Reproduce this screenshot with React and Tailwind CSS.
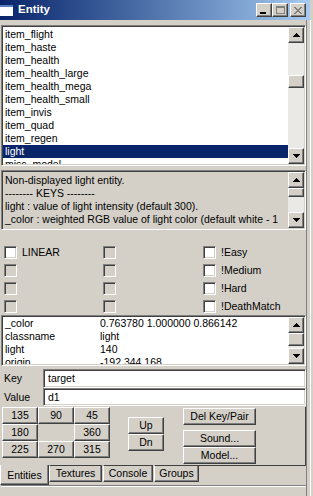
import React from "react";

// classic win2000 bevels
const raised =
  "bg-[#d4d0c8] border border-t-white border-l-white border-r-[#404040] border-b-[#404040] shadow-[inset_-1px_-1px_#808080]";
const sunken =
  "border border-t-[#808080] border-l-[#808080] border-r-white border-b-white shadow-[inset_1px_1px_#404040,inset_-1px_-1px_#d4d0c8]";

const entityNames = [
  "item_flight",
  "item_haste",
  "item_health",
  "item_health_large",
  "item_health_mega",
  "item_health_small",
  "item_invis",
  "item_quad",
  "item_regen",
  "light",
  "misc_model",
];

const description = [
  "Non-displayed light entity.",
  "-------- KEYS --------",
  "light : value of light intensity (default 300).",
  "_color : weighted RGB value of light color (default white - 1",
];

const flagRows = [
  [{ label: "LINEAR", on: true }, { on: false }, { label: "!Easy", on: true }],
  [{ on: false }, { on: false }, { label: "!Medium", on: true }],
  [{ on: false }, { on: false }, { label: "!Hard", on: true }],
  [{ on: false }, { on: false }, { label: "!DeathMatch", on: true }],
];

const keyValues = [
  ["_color", "0.763780 1.000000 0.866142"],
  ["classname", "light"],
  ["light", "140"],
  ["origin", "-192 344 168"],
];

const tabs = ["Entities", "Textures", "Console", "Groups"];

// small pixel triangle for scroll buttons
function Arrow({ down }) {
  const rows = down ? [7, 5, 3, 1] : [1, 3, 5, 7];
  return (
    <svg width="7" height="4" viewBox="0 0 7 4" shapeRendering="crispEdges">
      {rows.map((w, i) => (
        <rect key={i} x={(7 - w) / 2} y={i} width={w} height="1" fill="#000" />
      ))}
    </svg>
  );
}

function ScrollButton({ down }) {
  return (
    <div className={`${raised} w-[16px] h-[16px] shrink-0 flex items-center justify-center`}>
      <Arrow down={down} />
    </div>
  );
}

// gapClass / thumbClass are full class strings so tailwind sees them
function ScrollBar({ gapClass, thumbClass }) {
  return (
    <div className="w-[16px] shrink-0 flex flex-col">
      <ScrollButton />
      <div className="flex-1 flex flex-col bg-[#ebe9e5]">
        <div className={gapClass} />
        <div className={`${raised} ${thumbClass} shrink-0`} />
      </div>
      <ScrollButton down />
    </div>
  );
}

function Checkbox({ on }) {
  return (
    <div
      className={`${sunken} w-[13px] h-[13px] shrink-0 ${on ? "bg-white" : "bg-[#d4d0c8]"}`}
    />
  );
}

function Button({ children, className }) {
  return (
    <div className={`${raised} flex items-center justify-center leading-none ${className}`}>
      {children}
    </div>
  );
}

function TitleBar() {
  return (
    <div className="h-[20px] flex items-center bg-linear-to-r from-[#0a246a] to-[#a6caf0]">
      <div className="w-[13px] h-[11px] bg-white border-t-2 border-[#5a7fc0]" />
      <span className="ml-[5px] text-white font-bold text-[11.5px] leading-none">Entity</span>
      <div className="ml-auto flex items-center mr-[4px]">
        <div className={`${raised} w-[16px] h-[14px] flex items-end justify-center pb-[2px]`}>
          <div className="w-[6px] h-[2px] bg-black -ml-[2px]" />
        </div>
        <div className={`${raised} w-[16px] h-[14px] flex items-center justify-center`}>
          <div className="w-[9px] h-[8px] border border-t-2 border-[#808080]" />
        </div>
        <div className={`${raised} ml-[2px] w-[16px] h-[14px] flex items-center justify-center`}>
          <svg width="8" height="7" viewBox="0 0 8 7" shapeRendering="crispEdges">
            <path d="M0 0h2l2 2.5L6 0h2L5 3.5 8 7H6L4 4.5 2 7H0l3-3.5z" fill="#808080" />
          </svg>
        </div>
      </div>
    </div>
  );
}

export default function App() {
  return (
    <div className="w-[313px] h-[496px] bg-[#d4d0c8] flex flex-col overflow-hidden text-black text-[10.5px] font-['Liberation_Sans',Arial,sans-serif]">
      <div className="flex">
        <div className="w-[310px]">
          <TitleBar />
        </div>
        <div className="flex-1 bg-[#d4d0c8]" />
      </div>

      <div className="flex flex-1">
        <div className="w-[306px] pl-[1px] flex flex-col">
          {/* entity class list */}
          <div className={`${sunken} mt-[5px] h-[141px] flex bg-white`}>
            <div className="m-[1px] flex flex-1 overflow-hidden">
              <div className="flex-1 pt-[1px] overflow-hidden">
                {entityNames.map((name) => (
                  <div
                    key={name}
                    className={`h-[13px] leading-[13px] pl-[2px] whitespace-nowrap ${
                      name === "light" ? "bg-[#0a246a] text-white" : ""
                    }`}
                  >
                    {name}
                  </div>
                ))}
              </div>
              <ScrollBar gapClass="h-[32px]" thumbClass="h-[13px]" />
            </div>
          </div>

          {/* description */}
          <div className={`${sunken} mt-[4px] h-[60px] flex bg-[#d4d0c8]`}>
            <div className="m-[1px] flex flex-1 overflow-hidden">
              <div className="flex-1 pt-[2px] overflow-hidden">
                {description.map((line) => (
                  <div key={line} className="h-[13px] leading-[13px] pl-[2px] whitespace-nowrap">
                    {line}
                  </div>
                ))}
              </div>
              <ScrollBar gapClass="h-0" thumbClass="h-[9px]" />
            </div>
          </div>

          {/* spawnflags */}
          <div className="mt-[13px] flex flex-col pl-[3px]">
            {flagRows.map((row, r) => (
              <div key={r} className="h-[18px] flex items-center">
                {row.map((cell, c) => (
                  <div
                    key={c}
                    className={`flex items-center gap-[5px] ${
                      c === 0 ? "w-[99px]" : c === 1 ? "w-[100px]" : "flex-1"
                    }`}
                  >
                    <Checkbox on={cell.on} />
                    {cell.label && <span className="leading-none">{cell.label}</span>}
                  </div>
                ))}
              </div>
            ))}
          </div>

          {/* key / value pairs */}
          <div className={`${sunken} h-[51px] flex bg-white`}>
            <div className="m-[1px] flex flex-1 overflow-hidden">
              <div className="flex-1 overflow-hidden">
                {keyValues.map(([k, v]) => (
                  <div key={k} className="h-[13px] leading-[13px] flex whitespace-nowrap">
                    <span className="w-[97px] pl-[2px] shrink-0">{k}</span>
                    <span>{v}</span>
                  </div>
                ))}
              </div>
              <ScrollBar gapClass="h-0" thumbClass="h-[13px]" />
            </div>
          </div>

          <div className="mt-[3px] h-[19px] flex items-center">
            <span className="w-[42px] pl-[3px] leading-none">Key</span>
            <div className={`${sunken} flex-1 h-full bg-white flex items-center pl-[4px] leading-none`}>
              target
            </div>
          </div>
          <div className="h-[18px] flex items-center">
            <span className="w-[42px] pl-[3px] leading-none">Value</span>
            <div className={`${sunken} flex-1 h-full bg-white flex items-center pl-[4px] leading-none`}>
              d1
            </div>
          </div>

          {/* angle buttons + actions */}
          <div className="mt-[1px] h-[58px] flex border-r border-[#404040]">
            <div className="grid grid-cols-[36px_36px_36px] grid-rows-[17px_17px_17px] ml-[1px]">
              <Button>135</Button>
              <Button>90</Button>
              <Button>45</Button>
              <Button>180</Button>
              <div />
              <Button>360</Button>
              <Button>225</Button>
              <Button>270</Button>
              <Button>315</Button>
            </div>
            <div className="ml-[18px] mt-[10px] flex flex-col">
              <Button className="w-[36px] h-[17px]">Up</Button>
              <Button className="w-[36px] h-[17px]">Dn</Button>
            </div>
            <div className="ml-[19px] mt-[1px] flex flex-col">
              <Button className="w-[73px] h-[17px]">Del Key/Pair</Button>
              <Button className="w-[73px] h-[17px] mt-[5px]">Sound...</Button>
              <Button className="w-[73px] h-[17px]">Model...</Button>
            </div>
          </div>

          {/* tabs along the bottom */}
          <div className="h-[20px] flex -ml-[1px]">
            {tabs.map((t, i) =>
              i === 0 ? (
                <div
                  key={t}
                  className="w-[49px] h-[20px] border-l border-l-white border-r border-r-[#404040] border-b border-b-[#404040] shadow-[inset_-1px_-1px_#808080] flex items-end justify-center pb-[4px] leading-none"
                >
                  {t}
                </div>
              ) : (
                <div
                  key={t}
                  className={`h-[17px] border-t border-t-[#404040] border-l border-l-white border-r border-r-[#404040] border-b border-b-[#404040] shadow-[inset_-1px_-1px_#808080] flex items-center justify-center leading-none ${
                    i === 1 ? "w-[53px]" : i === 2 ? "w-[50px] ml-[1px]" : "w-[45px] ml-[1px]"
                  }`}
                >
                  {t}
                </div>
              )
            )}
            <div className="flex-1 border-t border-[#404040]" />
          </div>

          <div className="flex-1 border-t border-t-[#808080] shadow-[inset_0_1px_white]" />
        </div>

        {/* right window frame */}
        <div className="flex-1 flex">
          <div className="w-[1px] bg-[#808080]" />
          <div className="w-[3px] bg-[#d4d0c8]" />
          <div className="w-[1px] bg-white" />
          <div className="flex-1 bg-[#d4d0c8]" />
        </div>
      </div>
    </div>
  );
}
